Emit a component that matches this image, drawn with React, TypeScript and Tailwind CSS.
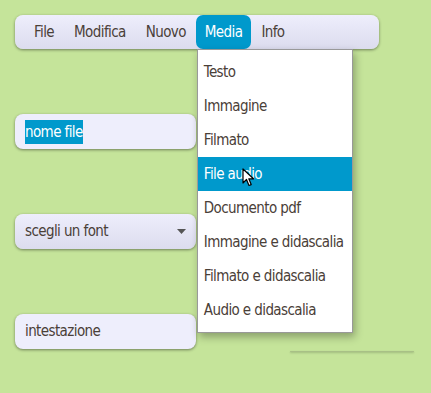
import React from "react";

const MENU = ["File", "Modifica", "Nuovo", "Media", "Info"];
const MEDIA_ITEMS = [
  "Testo",
  "Immagine",
  "Filmato",
  "File audio",
  "Documento pdf",
  "Immagine e didascalia",
  "Filmato e didascalia",
  "Audio e didascalia",
];

const font = {
  fontFamily: '"DejaVu Sans Condensed", "DejaVu Sans", sans-serif',
  fontStretch: "condensed",
};

export default function App() {
  return (
    <div
      className="w-[431px] h-[393px] bg-[#c5e49a] text-[#4a4038] text-[15px] tracking-[-0.6px] overflow-hidden flex flex-col pl-[15px] pt-[15px]"
      style={font}
    >
      {/* menu bar */}
      <div className="relative w-[364px] h-[34px] rounded-[8px] bg-gradient-to-b from-[#eeeefc] to-[#dcdcee] shadow-[0_1px_3px_rgba(0,0,0,0.45)] flex items-stretch pl-[9px]">
        {MENU.map((m) => (
          <div
            key={m}
            className={
              m === "Media"
                ? "relative px-[9px] flex items-center rounded-[7px] bg-[#0099cc] text-white"
                : "px-[10px] flex items-center"
            }
          >
            {m}
            {m === "Media" && (
              <div className="absolute left-[1px] top-[34px] w-[156px] bg-white border border-[#999] shadow-[2px_4px_8px_rgba(0,0,0,0.3)] py-[5px] z-10 text-[#4a4038]">
                {MEDIA_ITEMS.map((it) => (
                  <div
                    key={it}
                    className={
                      it === "File audio"
                        ? "relative h-[34px] flex items-center px-[6px] bg-[#0099cc] text-white whitespace-nowrap"
                        : "h-[34px] flex items-center px-[6px] whitespace-nowrap"
                    }
                  >
                    {it}
                    {it === "File audio" && (
                      <svg className="absolute left-[44px] top-[11px]" width="14" height="20" viewBox="0 0 14 20">
                        <path d="M1 1 L1 15 L4.5 11.5 L7 17.5 L9.2 16.6 L6.8 10.8 L11.5 10.8 Z" fill="#fff" stroke="#000" strokeWidth="1.2" strokeLinejoin="round" />
                      </svg>
                    )}
                  </div>
                ))}
              </div>
            )}
          </div>
        ))}
      </div>

      {/* fields */}
      <div className="mt-[65px] w-[181px] h-[35px] rounded-[8px] bg-[#eeeefc] shadow-[0_1px_3px_rgba(0,0,0,0.45)] flex items-center px-[10px]">
        <span className="bg-[#0099cc] text-white leading-[24px]">nome file</span>
      </div>

      <div className="mt-[65px] w-[181px] h-[35px] rounded-[8px] bg-gradient-to-b from-[#eeeefc] to-[#dcdcee] shadow-[0_1px_3px_rgba(0,0,0,0.45)] flex items-center justify-between px-[10px]">
        <span>scegli un font</span>
        <svg width="9" height="5" viewBox="0 0 9 5">
          <path d="M0 0 L9 0 L4.5 5 Z" fill="#555" />
        </svg>
      </div>

      <div className="relative mt-[65px] w-[181px] h-[35px] rounded-[8px] bg-[#eeeefc] shadow-[0_1px_3px_rgba(0,0,0,0.45)] flex items-center px-[10px]">
        intestazione
        <div className="absolute left-[275px] top-[37px] w-[124px] h-px bg-[#a8c086] shadow-[0_1px_2px_rgba(0,0,0,0.25)] rounded-full" />
      </div>
    </div>
  );
}
